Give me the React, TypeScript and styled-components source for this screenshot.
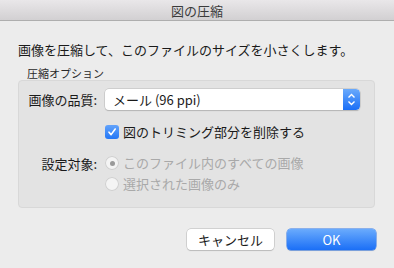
import React from "react";
import styled, { createGlobalStyle } from "styled-components";

const Global = createGlobalStyle`
  html, body { margin: 0; padding: 0; background: #ececec; }
  body { font-family: "Noto Sans CJK JP", "Noto Sans", sans-serif; -webkit-font-smoothing: antialiased; }
`;

const Window = styled.div`
  width: 394px;
  height: 268px;
  background: #ececec;
  display: flex;
  flex-direction: column;
  overflow: hidden;
  color: #1a1a1a;
`;

const TitleBar = styled.div`
  height: 20px;
  border-bottom: 1px solid #aeaeae;
  background: linear-gradient(#e9e7e9, #d2d0d2);
  display: flex;
  align-items: center;
  justify-content: center;
  font-size: 13px;
  color: #3b3b3b;
`;

const Body = styled.div`
  padding: 0 19px 0 18px;
  display: flex;
  flex-direction: column;
`;

const Description = styled.div`
  margin-top: 21px;
  font-size: 13px;
  line-height: 16px;
  height: 16px;
  white-space: nowrap;
`;

const GroupLabel = styled.div`
  margin-top: 8px;
  padding-left: 9px;
  font-size: 11px;
  line-height: 14px;
  height: 14px;
  color: #2a2a2a;
`;

const GroupBox = styled.div`
  height: 128px;
  box-sizing: border-box;
  background: #e3e3e3;
  border: 1px solid #d8d8d8;
  border-radius: 4px;
  padding: 8px 14px 0 0;
  display: grid;
  grid-template-columns: 78px 1fr;
  column-gap: 8px;
  grid-auto-rows: min-content;
  align-items: center;
`;

const FieldLabel = styled.div<{ $top?: number }>`
  text-align: right;
  font-size: 13px;
  line-height: 16px;
  white-space: nowrap;
  margin-top: ${(p) => p.$top ?? 0}px;
  align-self: start;
`;

const Cell = styled.div<{ $top?: number }>`
  margin-top: ${(p) => p.$top ?? 0}px;
  display: flex;
  align-items: center;
`;

const Popup = styled.div`
  width: 255px;
  height: 21px;
  box-sizing: border-box;
  background: #fff;
  border-radius: 4px;
  box-shadow: 0 0 0 0.5px #b9b9b9, 0 1px 1px rgba(0, 0, 0, 0.22);
  display: flex;
  align-items: center;
  justify-content: space-between;
  font-size: 13px;
  padding-left: 8px;
  overflow: hidden;
`;

const Stepper = styled.div`
  width: 17px;
  height: 21px;
  background: linear-gradient(#6aaafc, #1a6ef6);
  border-radius: 0 4px 4px 0;
  display: flex;
  align-items: center;
  justify-content: center;
`;

const CheckRow = styled.label`
  display: flex;
  align-items: center;
  gap: 4px;
  font-size: 13px;
  line-height: 16px;
  white-space: nowrap;
`;

const CheckBox = styled.span`
  width: 14px;
  height: 14px;
  border-radius: 3px;
  background: linear-gradient(#62a3fb, #2377f6);
  display: inline-flex;
  align-items: center;
  justify-content: center;
`;

const RadioRow = styled.label<{ $top?: number }>`
  display: flex;
  align-items: center;
  gap: 4px;
  font-size: 13px;
  line-height: 16px;
  color: #a9a9a9;
  white-space: nowrap;
  margin-top: ${(p) => p.$top ?? 0}px;
`;

const RadioDot = styled.span<{ $on?: boolean }>`
  width: 14px;
  height: 14px;
  border-radius: 50%;
  background: #f4f4f4;
  box-shadow: inset 0 0 0 1px #cfcfcf;
  display: inline-flex;
  align-items: center;
  justify-content: center;
  &::after {
    content: "";
    width: 5px;
    height: 5px;
    border-radius: 50%;
    background: ${(p) => (p.$on ? "#9a9a9a" : "transparent")};
  }
`;

const Stack = styled.div`
  display: flex;
  flex-direction: column;
`;

const Footer = styled.div`
  margin-top: 21px;
  padding-right: 18px;
  display: flex;
  justify-content: flex-end;
  gap: 13px;
`;

const Button = styled.button<{ $primary?: boolean }>`
  height: 21px;
  width: ${(p) => (p.$primary ? 89 : 87)}px;
  box-sizing: border-box;
  border-radius: 4px;
  font-family: "Noto Sans CJK JP", "Noto Sans", sans-serif;
  font-size: 13px;
  padding: 0;
  border: none;
  color: ${(p) => (p.$primary ? "#fff" : "#1a1a1a")};
  background: ${(p) => (p.$primary ? "linear-gradient(#6aabfd, #1b6ff6)" : "#fff")};
  box-shadow: ${(p) =>
    p.$primary
      ? "0 0 0 0.5px #2a74ea, 0 1px 1px rgba(0,0,0,0.15)"
      : "0 0 0 0.5px #b5b5b5, 0 1px 1px rgba(0,0,0,0.18)"};
`;

export default function App() {
  return (
    <>
      <Global />
      <Window>
        <TitleBar>図の圧縮</TitleBar>
        <Body>
          <Description>画像を圧縮して、このファイルのサイズを小さくします。</Description>
          <GroupLabel>圧縮オプション</GroupLabel>
          <GroupBox>
            <FieldLabel $top={3}>画像の品質:</FieldLabel>
            <Cell>
              <Popup>
                <span>メール (96 ppi)</span>
                <Stepper>
                  <svg width="9" height="13" viewBox="0 0 9 13">
                    <path d="M1.5 4.5 L4.5 1.5 L7.5 4.5 M1.5 8.5 L4.5 11.5 L7.5 8.5" fill="none" stroke="#fff" strokeWidth="1.4" />
                  </svg>
                </Stepper>
              </Popup>
            </Cell>
            <div />
            <Cell $top={14}>
              <CheckRow>
                <CheckBox>
                  <svg width="10" height="10" viewBox="0 0 10 10">
                    <path d="M2 5.2 L4.1 7.6 L8.2 2" fill="none" stroke="#fff" strokeWidth="1.6" strokeLinecap="round" strokeLinejoin="round" />
                  </svg>
                </CheckBox>
                図のトリミング部分を削除する
              </CheckRow>
            </Cell>
            <FieldLabel $top={16}>設定対象:</FieldLabel>
            <Stack>
              <RadioRow $top={15}>
                <RadioDot $on />
                このファイル内のすべての画像
              </RadioRow>
              <RadioRow $top={5}>
                <RadioDot />
                選択された画像のみ
              </RadioRow>
            </Stack>
          </GroupBox>
        </Body>
        <Footer>
          <Button>キャンセル</Button>
          <Button $primary>OK</Button>
        </Footer>
      </Window>
    </>
  );
}
